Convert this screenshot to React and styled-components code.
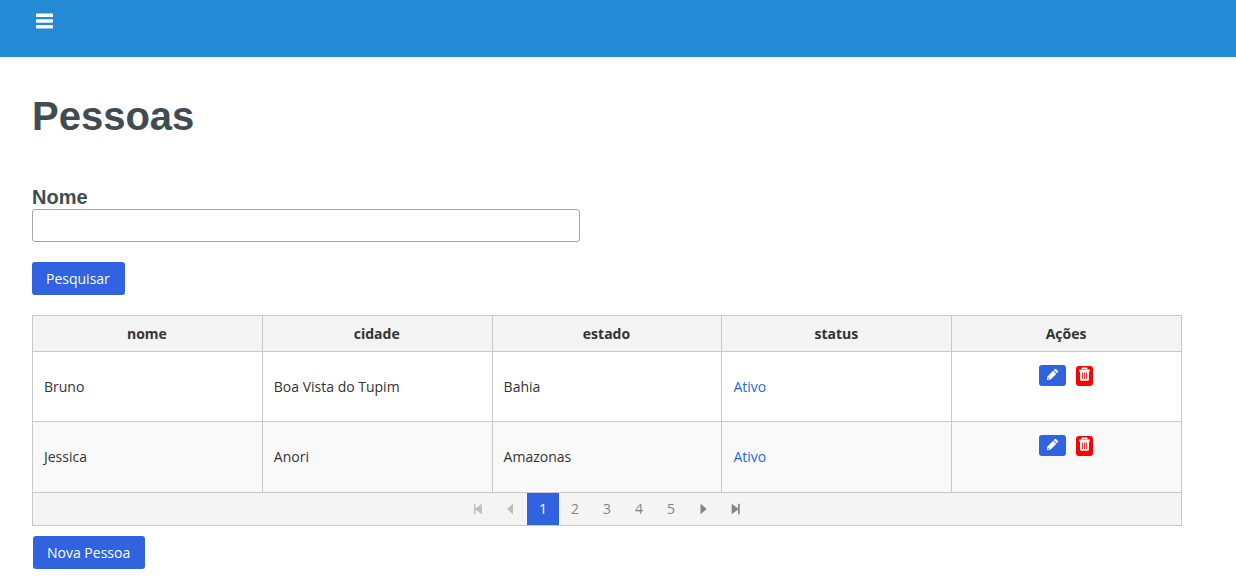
import React from "react";
import styled, { createGlobalStyle } from "styled-components";

const GlobalStyle = createGlobalStyle`
  *, *::before, *::after { box-sizing: border-box; }
  body {
    margin: 0;
    background: #ffffff;
    color: #333333;
    font: 14px/20px "Open Sans", "Noto Sans", sans-serif;
  }
`;

const TopBar = styled.header`
  height: 57px;
  padding: 12px 35px;
  background: #238ad6;
`;

const MenuButton = styled.button`
  display: flex;
  padding: 0;
  border: 0;
  background: transparent;
  color: #ffffff;
  cursor: pointer;
`;

const Page = styled.main`
  display: flex;
  flex-direction: column;
  align-items: flex-start;
  padding: 36px 54px 16px 32px;
`;

const Title = styled.h1`
  margin: 0 0 48px;
  color: #404c51;
  font: bold 40px/46px "Liberation Sans", Arial, sans-serif;
`;

const SearchForm = styled.form`
  display: flex;
  flex-direction: column;
  align-items: flex-start;
  width: 100%;
  margin-bottom: 20px;
`;

const Label = styled.label`
  padding-bottom: 2px;
  color: #404c51;
  font: bold 20px/20px "Liberation Sans", Arial, sans-serif;
`;

const TextField = styled.input`
  width: 100%;
  max-width: 548px;
  height: 33px;
  margin: 0 0 20px;
  padding: 6px;
  border: 1px solid #a6a6a6;
  border-radius: 3px;
  background: #ffffff;
  color: inherit;
  font: inherit;
`;

const Button = styled.button`
  height: 33px;
  padding: 0 15px 0 14px;
  border: 0;
  border-radius: 3px;
  background: #3162df;
  color: #ffffff;
  font: inherit;
  cursor: pointer;
`;

const DataPanel = styled.section`
  width: 100%;
  margin-bottom: 10px;
`;

const Footer = styled.footer`
  padding-left: 1px;
`;

const Table = styled.table`
  width: 100%;
  table-layout: fixed;
  border-collapse: collapse;
`;

const HeadCell = styled.th`
  height: 36px;
  padding: 0 12px 0 11px;
  border: 1px solid #c8c8c8;
  background: #f4f4f4;
  font-weight: bold;
`;

const Row = styled.tr`
  height: 70px;
  background: #ffffff;
  &:nth-child(even) { background: #f9f9f9; }
  &:last-child { height: 71px; }
`;

const Cell = styled.td`
  padding: 0 12px 0 11px;
  border: 1px solid #c8c8c8;
`;

const ActionCell = styled(Cell)`
  padding-top: 13px;
  vertical-align: top;
`;

const Actions = styled.div`
  display: flex;
  justify-content: center;
  align-items: flex-end;
  gap: 10px;
`;

const StatusLink = styled.a`
  color: #186ddd;
  text-decoration: none;
`;

const IconButton = styled.button`
  display: flex;
  justify-content: center;
  width: ${({ $danger }) => ($danger ? 17 : 27)}px;
  height: ${({ $danger }) => ($danger ? 20 : 21)}px;
  padding: ${({ $danger }) => ($danger ? 0 : 3)}px 0 0;
  border: 0;
  border-radius: 3px;
  background: ${({ $danger }) => ($danger ? "#ff0000" : "#3162df")};
  color: #ffffff;
  cursor: pointer;
`;

const Paginator = styled.nav`
  display: flex;
  justify-content: center;
  border: 1px solid #c8c8c8;
  border-top: 0;
  background: #f4f4f4;
`;

const PageButton = styled.button`
  display: flex;
  align-items: center;
  justify-content: center;
  width: 32px;
  height: 32px;
  padding: 0;
  border: 0;
  background: ${({ $active }) => ($active ? "#3162df" : "transparent")};
  color: ${({ $active }) => ($active ? "#ffffff" : "#848484")};
  font: inherit;
  cursor: pointer;
  &:disabled { color: #bdbdbd; cursor: default; }
`;

const MenuIcon = () => (
  <svg width="19" height="18" viewBox="0 0 19 18" fill="currentColor" aria-hidden="true">
    <rect x="1" y="1.6" width="17" height="3.4" rx=".6" />
    <rect x="1" y="7.3" width="17" height="3.4" rx=".6" />
    <rect x="1" y="13" width="17" height="3.4" rx=".6" />
  </svg>
);

const PencilIcon = () => (
  <svg width="13" height="13" viewBox="0 0 13 13" fill="currentColor" aria-hidden="true">
    <path d="M.8 12 1.5 8.4 7.1 2.8 10.2 5.9 4.6 11.5Z" />
    <path d="M7.7 2.2 8.9 1Q9.4.5 9.9 1L12 3.1Q12.5 3.6 12 4.1L10.8 5.3Z" />
    <path d="M2.1 9.6 3.4 10.9 2.4 11.1 1.9 10.6Z" fill="#3162df" />
  </svg>
);

const TrashIcon = () => (
  <svg width="13" height="15" viewBox="0 0 13 15" fill="none" aria-hidden="true">
    <path d="M4.2 3.6V2.7Q4.2 2.2 4.7 2.2H8.3Q8.8 2.2 8.8 2.7V3.6" stroke="currentColor" strokeWidth="1.4" />
    <path d="M1.2 3.4H11.8V5.4H11V13.6Q11 14.8 9.8 14.8H3.2Q2 14.8 2 13.6V5.4H1.2Z" fill="currentColor" />
    <path d="M4.5 6.5V13M6.5 6.5V13M8.5 6.5V13" stroke="#ff0000" strokeWidth=".8" />
  </svg>
);

const arrows = {
  first: "M3 2.7H4.5V7.4L10.8 2.7V13.3L4.5 8.6V13.3H3Z",
  previous: "M10 2.7V13.3L4 8Z",
  next: "M5.5 2.7V13.3L11.7 8Z",
  last: "M4.7 2.7 11 7.4V2.7H12.7V13.3H11V8.6L4.7 13.3Z",
};

const ArrowIcon = ({ kind }) => (
  <svg width="16" height="16" viewBox="0 0 16 16" fill="currentColor" aria-hidden="true">
    <path d={arrows[kind]} />
  </svg>
);

const columns = ["nome", "cidade", "estado", "status", "Ações"];
const people = [
  { name: "Bruno", city: "Boa Vista do Tupim", state: "Bahia", status: "Ativo" },
  { name: "Jessica", city: "Anori", state: "Amazonas", status: "Ativo" },
];
const pages = [1, 2, 3, 4, 5];

export default function App() {
  return (
    <>
      <GlobalStyle />
      <TopBar>
        <MenuButton type="button" aria-label="Menu"><MenuIcon /></MenuButton>
      </TopBar>
      <Page>
        <Title>Pessoas</Title>
        <SearchForm onSubmit={(event) => event.preventDefault()}>
          <Label htmlFor="nome">Nome</Label>
          <TextField id="nome" type="text" />
          <Button type="submit">Pesquisar</Button>
        </SearchForm>
        <DataPanel>
          <Table>
            <thead>
              <tr>
                {columns.map((column) => <HeadCell key={column} scope="col">{column}</HeadCell>)}
              </tr>
            </thead>
            <tbody>
              {people.map((person) => (
                <Row key={person.name}>
                  <Cell>{person.name}</Cell>
                  <Cell>{person.city}</Cell>
                  <Cell>{person.state}</Cell>
                  <Cell><StatusLink href="#status">{person.status}</StatusLink></Cell>
                  <ActionCell>
                    <Actions>
                      <IconButton type="button" aria-label="Editar"><PencilIcon /></IconButton>
                      <IconButton type="button" $danger aria-label="Excluir"><TrashIcon /></IconButton>
                    </Actions>
                  </ActionCell>
                </Row>
              ))}
            </tbody>
          </Table>
          <Paginator aria-label="Paginação">
            <PageButton type="button" disabled aria-label="Primeira"><ArrowIcon kind="first" /></PageButton>
            <PageButton type="button" disabled aria-label="Anterior"><ArrowIcon kind="previous" /></PageButton>
            {pages.map((page) => (
              <PageButton key={page} type="button" $active={page === 1} aria-current={page === 1 ? "page" : undefined}>
                {page}
              </PageButton>
            ))}
            <PageButton type="button" aria-label="Próxima"><ArrowIcon kind="next" /></PageButton>
            <PageButton type="button" aria-label="Última"><ArrowIcon kind="last" /></PageButton>
          </Paginator>
        </DataPanel>
        <Footer>
          <Button type="button">Nova Pessoa</Button>
        </Footer>
      </Page>
    </>
  );
}
